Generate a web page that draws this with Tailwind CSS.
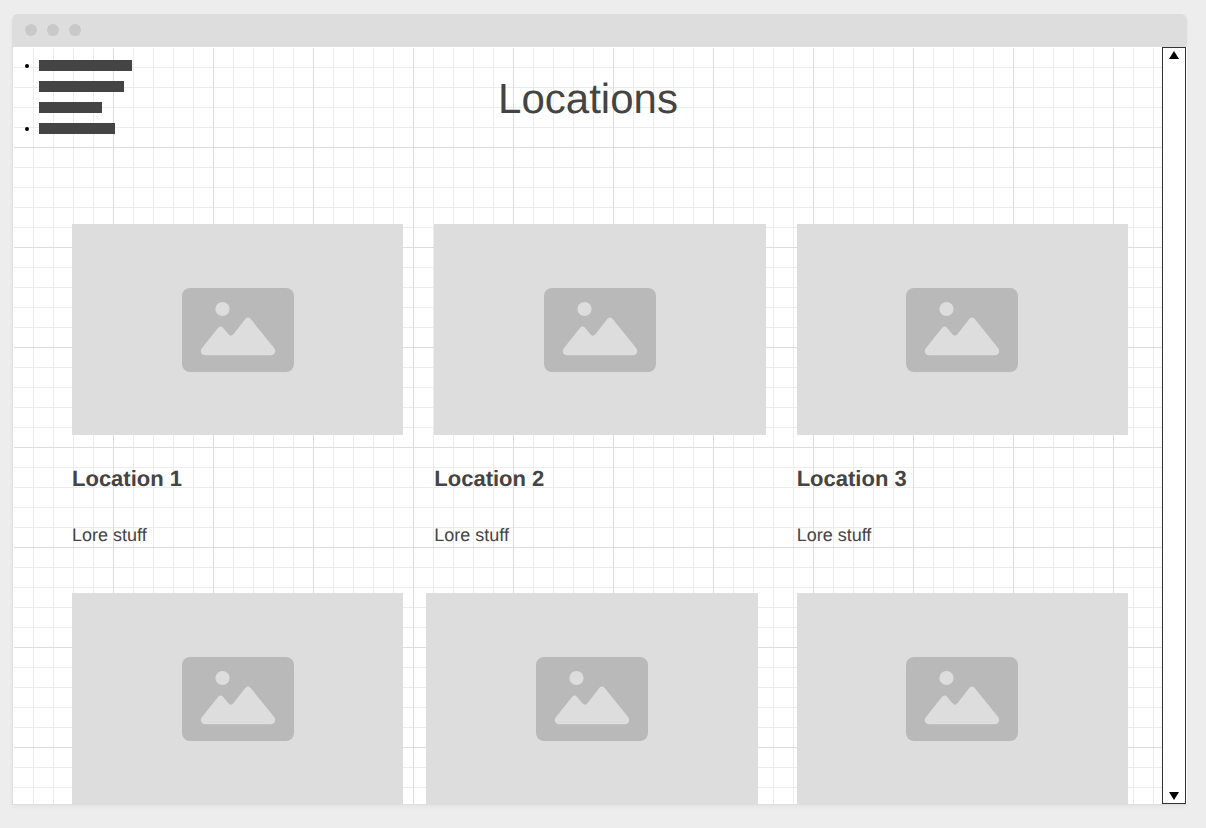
<!DOCTYPE html>
<html lang="en">
<head>
<meta charset="utf-8">
<meta name="viewport" content="width=device-width, initial-scale=1">
<title>Locations</title>
<script src="https://cdn.jsdelivr.net/npm/@tailwindcss/browser@4"></script>
</head>
<body class="bg-[#ededed] font-['Liberation_Sans',Arial,sans-serif] text-[#444444] [text-rendering:geometricPrecision]">
<svg class="hidden" aria-hidden="true">
  <symbol id="picture" viewBox="0 0 112 84">
    <rect width="112" height="84" rx="8" fill="#b9b9b9"/>
    <circle cx="40.5" cy="21" r="7.1" fill="#dddddd"/>
    <path fill="#dddddd" d="M22.9 67.2C19.2 67.2 17.6 63 19.8 60.2L36.2 39.8Q38.6 37 41 39.8L46.4 46.3Q48.9 49 51.4 46.3L63.5 30.8Q66 28 68.5 30.8L92.1 60C94.4 63 92.8 67.2 89.2 67.2Z"/>
  </symbol>
</svg>
<div class="flex h-screen flex-col pt-[14px] pr-[19px] pb-[23px] pl-3">
  <div class="flex min-h-0 grow flex-col rounded-t-md shadow-[0_2px_4px_rgba(0,0,0,0.04)]">
    <div class="flex h-[33px] shrink-0 items-start gap-[10px] rounded-t-md bg-[#dddddd] px-[13px] pt-[10px]">
      <span class="size-3 rounded-full bg-[#c9c9c9]"></span>
      <span class="size-3 rounded-full bg-[#c9c9c9]"></span>
      <span class="size-3 rounded-full bg-[#c9c9c9]"></span>
    </div>
    <div class="flex min-h-0 grow border-b border-l border-[#dddddd] bg-white pr-px">
      <main class="min-w-0 grow overflow-hidden pt-px pl-px">
        <div class="min-h-full bg-[linear-gradient(to_right,transparent_99px,#dddddd_99px),linear-gradient(to_bottom,transparent_99px,#dddddd_99px),linear-gradient(to_right,transparent_19px,#ececec_19px),linear-gradient(to_bottom,transparent_19px,#ececec_19px)] bg-[size:100px_100px,100px_100px,20px_20px,20px_20px]">
          <header class="grid h-[176px] grid-cols-[1fr_auto_1fr] items-start">
            <nav aria-label="Main" class="pt-3 pl-[11px]">
              <ul class="flex flex-col gap-[10px]">
                <li class="flex gap-[10px]">
                  <span class="mt-1 size-1 rounded-full bg-black"></span>
                  <ul class="flex flex-col gap-[10px]">
                    <li class="h-[11px] w-[93px] bg-[#444444]"></li>
                    <li class="h-[11px] w-[85px] bg-[#444444]"></li>
                    <li class="h-[11px] w-[63px] bg-[#444444]"></li>
                  </ul>
                </li>
                <li class="flex gap-[10px]">
                  <span class="mt-1 size-1 rounded-full bg-black"></span>
                  <span class="h-[11px] w-[76px] bg-[#444444]"></span>
                </li>
              </ul>
            </nav>
            <h1 class="pt-[27px] text-[42px] leading-[48px]">Locations</h1>
          </header>
          <div class="grid grid-cols-3 gap-x-[31px] gap-y-12 pr-[34px] pl-[58px]">
            <article>
              <div class="flex aspect-[331/211] items-center justify-center bg-[#dddddd]"><svg class="h-[84px] w-28" role="img" aria-label="Location 1 picture"><use href="#picture"/></svg></div>
              <h2 class="mt-[31px] text-[22px] leading-[26px] font-bold">Location 1</h2>
              <p class="mt-[33px] text-[18px] leading-5">Lore stuff</p>
            </article>
            <article>
              <div class="flex aspect-[331/211] items-center justify-center bg-[#dddddd]"><svg class="h-[84px] w-28" role="img" aria-label="Location 2 picture"><use href="#picture"/></svg></div>
              <h2 class="mt-[31px] text-[22px] leading-[26px] font-bold">Location 2</h2>
              <p class="mt-[33px] text-[18px] leading-5">Lore stuff</p>
            </article>
            <article>
              <div class="flex aspect-[331/211] items-center justify-center bg-[#dddddd]"><svg class="h-[84px] w-28" role="img" aria-label="Location 3 picture"><use href="#picture"/></svg></div>
              <h2 class="mt-[31px] text-[22px] leading-[26px] font-bold">Location 3</h2>
              <p class="mt-[33px] text-[18px] leading-5">Lore stuff</p>
            </article>
            <article>
              <div class="flex aspect-[331/211] items-center justify-center bg-[#dddddd]"><svg class="h-[84px] w-28" role="img" aria-label="Location 4 picture"><use href="#picture"/></svg></div>
            </article>
            <article class="mr-2 -ml-2">
              <div class="flex aspect-[331/211] items-center justify-center bg-[#dddddd]"><svg class="h-[84px] w-28" role="img" aria-label="Location 5 picture"><use href="#picture"/></svg></div>
            </article>
            <article>
              <div class="flex aspect-[331/211] items-center justify-center bg-[#dddddd]"><svg class="h-[84px] w-28" role="img" aria-label="Location 6 picture"><use href="#picture"/></svg></div>
            </article>
          </div>
        </div>
      </main>
      <div class="flex w-6 shrink-0 flex-col items-center justify-between border border-[#333333] bg-white py-[3px]">
        <button type="button" aria-label="Scroll up"><svg class="block h-2 w-[10px]" viewBox="0 0 10 8"><path d="M5 0L10 8H0Z"/></svg></button>
        <button type="button" aria-label="Scroll down"><svg class="block h-2 w-[10px]" viewBox="0 0 10 8"><path d="M0 0H10L5 8Z"/></svg></button>
      </div>
    </div>
  </div>
</div>
</body>
</html>
